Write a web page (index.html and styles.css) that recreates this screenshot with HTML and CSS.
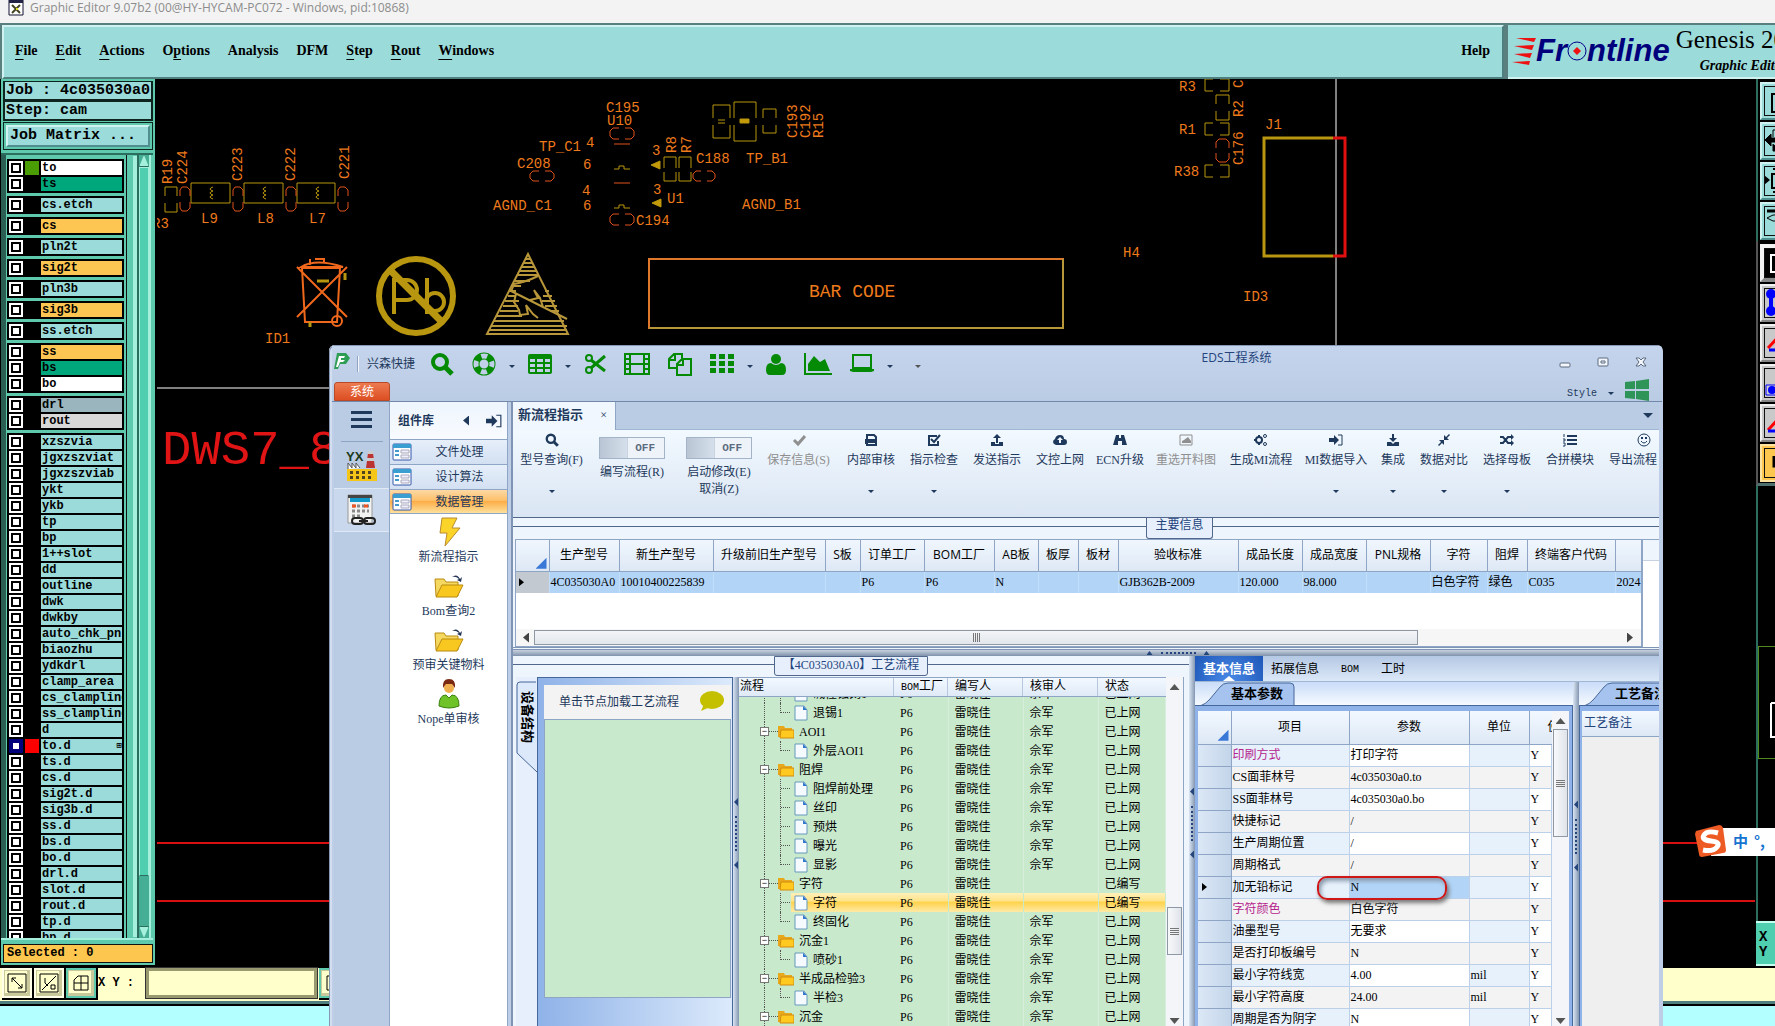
FILE: index.html
```
<!DOCTYPE html>
<html lang="zh-CN">
<head>
    <meta charset="UTF-8">
    <meta name="viewport" content="width=device-width, initial-scale=1.0">
    <title>Graphic Editor</title>
    <link rel="stylesheet" href="styles.css">
</head>
<body>
    <!-- shared icons -->
    <svg class="defs">
        <symbol id="search" viewBox="0 0 24 24"><circle cx="10" cy="10" r="7" fill="none" stroke="currentColor" stroke-width="4"/><path d="M15 15l7 7" stroke="currentColor" stroke-width="5"/></symbol>
        <symbol id="ring" viewBox="0 0 24 24"><circle cx="12" cy="12" r="8" fill="none" stroke="currentColor" stroke-width="7"/><circle cx="12" cy="12" r="8" fill="none" stroke="#c0d0e8" stroke-width="5" stroke-dasharray="6 6.57" stroke-dashoffset="3"/></symbol>
        <symbol id="grid" viewBox="0 0 24 20"><rect width="24" height="20" rx="2" fill="currentColor"/><path d="M2 5h5v3H2zM9 5h6v3H9zM17 5h5v3h-5zM2 10h5v3H2zM9 10h6v3H9zM17 10h5v3h-5zM2 15h5v3H2zM9 15h6v3H9zM17 15h5v3h-5z" fill="#c0d0e8"/></symbol>
        <symbol id="cut" viewBox="0 0 22 22"><g fill="none" stroke="currentColor" stroke-width="2"><circle cx="5" cy="5" r="3"/><circle cx="5" cy="17" r="3"/><path d="M7 7l14 11M7 15L21 3" stroke-width="3"/></g></symbol>
        <symbol id="film" viewBox="0 0 26 22"><path d="M1 1h24v20H1zM6 1v20M20 1v20M6 11h14M1 6h5M1 11h5M1 16h5M20 6h5M20 11h5M20 16h5" fill="none" stroke="currentColor" stroke-width="2"/></symbol>
        <symbol id="copy" viewBox="0 0 24 24"><path d="M9 16H1V7l5-5h8v5M1 8h6V2M9 22V12l5-5h9v16H9zM9 13h6V7" fill="none" stroke="currentColor" stroke-width="2"/></symbol>
        <symbol id="tiles" viewBox="0 0 24 20"><path d="M0 0h6v5H0zM9 0h6v5H9zM18 0h6v5h-6zM0 7h6v5H0zM9 7h6v5H9zM18 7h6v5h-6zM0 14h6v5H0zM9 14h6v5H9zM18 14h6v5h-6z" fill="currentColor"/></symbol>
        <symbol id="user" viewBox="0 0 20 22"><circle cx="10" cy="6" r="5" fill="currentColor"/><path d="M0 17q0-7 5-7 5 4 10 0 5 0 5 7 0 5-4 5H4q-4 0-4-5z" fill="currentColor"/></symbol>
        <symbol id="chart" viewBox="0 0 28 22"><path d="M1 0v21h27" fill="none" stroke="currentColor" stroke-width="2"/><path d="M4 18v-7l6-8 6 6 5-3 5 12z" fill="currentColor"/></symbol>
        <symbol id="laptop" viewBox="0 0 24 20"><path d="M3 1h18v13H3z" fill="none" stroke="currentColor" stroke-width="2"/><path d="M0 15h24v2l-3 1H3l-3-1z" fill="currentColor"/></symbol>
        <symbol id="check" viewBox="0 0 14 14"><path d="M2 7l4 4 7-8" fill="none" stroke="currentColor" stroke-width="3"/></symbol>
        <symbol id="print" viewBox="0 0 14 14"><path d="M3 6V2h7l2 2v2M3 12h9V9H3z" fill="none" stroke="currentColor" stroke-width="2"/><path d="M1 6h12v5h-2V9H3v2H1z" fill="currentColor"/></symbol>
        <symbol id="tick" viewBox="0 0 14 14"><path d="M11 8v4H2V3h8" fill="none" stroke="currentColor" stroke-width="2"/><path d="M4 6l3 3 6-7" fill="none" stroke="currentColor" stroke-width="2"/></symbol>
        <symbol id="upload" viewBox="0 0 14 14"><path d="M7 1l4 4H8v5H6V5H3zM1 9h4v2h4V9h4v4H1z" fill="currentColor"/></symbol>
        <symbol id="download" viewBox="0 0 14 14"><path d="M7 9l4-4H8V1H6v4H3zM1 9h4l2 2 2-2h4v4H1z" fill="currentColor"/></symbol>
        <symbol id="cloud" viewBox="0 0 14 14"><path d="M3 12q-3-1-3-3t2-3q1-4 5-4t4 4q3 0 3 3t-3 3z" fill="currentColor"/><path d="M7 4l3 3H8v3H6V7H4z" fill="#eef5fd"/></symbol>
        <symbol id="road" viewBox="0 0 14 14"><path d="M3 2h3v3h2V2h3l3 10H9V8H5v4H0z" fill="currentColor"/></symbol>
        <symbol id="image" viewBox="0 0 14 14"><path d="M1 2h12v10H1z" fill="none" stroke="currentColor"/><path d="M3 10V8l2-1 4-3 3 4v2z" fill="currentColor"/></symbol>
        <symbol id="gears" viewBox="0 0 14 14"><g fill="none" stroke="currentColor"><circle cx="5" cy="7" r="3" stroke-width="2"/><circle cx="11" cy="3" r="1.5"/><circle cx="11" cy="11" r="1.5"/></g><path d="M4 2h2v2H4zM4 10h2v2H4zM0 6h2v2H0z" fill="currentColor"/></symbol>
        <symbol id="signin" viewBox="0 0 14 14"><path d="M0 5h5V2l5 5-5 5V9H0z" fill="currentColor"/><path d="M9 2h4v10H9" fill="none" stroke="currentColor"/></symbol>
        <symbol id="compress" viewBox="0 0 14 14"><path d="M7 7V2l2 2 3-3 1 1-3 3 2 2zM7 7v5l-2-2-3 3-1-1 3-3-2-2z" fill="currentColor"/></symbol>
        <symbol id="shuffle" viewBox="0 0 14 14"><path d="M0 4h3l5 6h4M0 10h3l5-6h4" fill="none" stroke="currentColor" stroke-width="2"/><path d="M11 1l3 3-3 3zM11 7l3 3-3 3z" fill="currentColor"/></symbol>
        <symbol id="list" viewBox="0 0 14 14"><path d="M4 3h10M4 7h10M4 11h10" stroke="currentColor" stroke-width="2"/><path d="M1 1v3M0 6h2v2H0M0 10h2v3H0" fill="none" stroke="currentColor"/></symbol>
        <symbol id="smile" viewBox="0 0 14 14"><circle cx="7" cy="7" r="6" fill="none" stroke="currentColor"/><path d="M4 8q3 4 6 0" fill="none" stroke="currentColor"/><path d="M4 4h2v2H4zM8 4h2v2H8z" fill="currentColor"/></symbol>
        <symbol id="form" viewBox="0 0 20 18"><rect x="1" y="1" width="18" height="16" rx="1" fill="#fff" stroke="#35a"/><path d="M1 1h18v4H1z" fill="#3a9fd0"/><path d="M3 8h4M3 12h4" stroke="#49c" stroke-width="2"/><path d="M9 7h8v3H9zM9 12h8v3H9z" fill="#eef" stroke="#aab"/></symbol>
        <symbol id="open" viewBox="0 0 30 24"><path d="M1 5h9l2 3h12v14H2z" fill="#f5d860" stroke="#b98a10"/><path d="M8 11h21l-6 12H2z" fill="#f8c820" stroke="#b98a10"/><path d="M18 3q5-4 8 2l2-2-1 5-4-2 2-1q-3-3-7-2z" fill="#235"/></symbol>
        <symbol id="folder" viewBox="0 0 16 14"><path d="M0 1h6l1 2h7v9H0z" fill="#e8a81c"/><path d="M3 5h13v8H2z" fill="#ffc91f" stroke="#d18c10"/></symbol>
        <symbol id="doc" viewBox="0 0 14 16"><path d="M1 1h9l3 4v10H1z" fill="#f4faff" stroke="#69b"/><path d="M9 1l4 4H9z" fill="#37c"/></symbol>
    </svg>

    <header class="titlebar">
        <svg width="16" height="16" viewBox="0 0 16 16"><path d="M1 0h14v15H1z" fill="#fff" stroke="#113"/><path d="M1 0h14v3H1z" fill="#224"/><path d="M4 5l8 8M12 5l-8 8" stroke="#442" stroke-width="2"/><path d="M8 8h2v2H8z" fill="#dd2"/></svg>
        <span>Graphic Editor 9.07b2 (00@HY-HYCAM-PC072 - Windows, pid:10868)</span>
    </header>

    <div class="topbar">
        <nav class="menubar">
            <button><u>F</u>ile</button>
            <button><u>E</u>dit</button>
            <button><u>A</u>ctions</button>
            <button>O<u>p</u>tions</button>
            <button>Analysis</button>
            <button>DFM</button>
            <button><u>S</u>tep</button>
            <button><u>R</u>out</button>
            <button><u>W</u>indows</button>
            <button class="help">Help</button>
        </nav>
        <div class="brand">
            <svg width="24" height="28" viewBox="0 0 24 28"><path d="M4 1h20l-2 4zM2 9l20-1-2 5zM2 17l18-1-2 5zM0 25l18-1-1 4z" fill="#e11"/></svg>
            <span class="frontline">Fr<svg width="20" height="22" viewBox="0 0 20 22"><ellipse cx="10" cy="11" rx="9" ry="9" fill="none" stroke="#008" stroke-width="1"/><path d="M10 7l4 4-4 4-4-4z" fill="#e11"/></svg>ntline</span>
            <div class="product">
                <span class="product-name">Genesis 2000</span>
                <span class="product-sub">Graphic Editor</span>
            </div>
        </div>
    </div>

    <div class="workspace">
        <aside class="layers">
            <div class="job-line">Job : 4c035030a0</div>
            <div class="job-line">Step: cam</div>
            <div class="matrix-frame"><button class="matrix">Job Matrix ...</button></div>
            <div class="layer-area">
                <div class="layer-list" id="layerList"></div>
                <div class="motif-scroll"><i class="up"></i><i class="grip"></i><i class="down"></i></div>
            </div>
            <div class="selected">Selected : 0</div>
        </aside>

        <svg class="canvas">
            <g transform="translate(-157 -79)">
                <path d="M157 388h180M1336 79v270" stroke="#fff"/>
                <path d="M157 843h180M157 901h180M1660 843h60M1660 901h95" stroke="#d81010" stroke-width="2"/>
                <text class="big" x="162" y="464">DWS7_8</text>
                <g class="amber box">
                    <path d="M191 183h39v20h-39zM244 183h39v20h-39zM297 183h38v20h-38zM713 118v-13h17v13M713 125v13h17v-13M734 118v-16h22v16M734 125v16h22v-16M763 118v-9h13v9M763 125v8h13v-8M718 120h7M718 123h7M165 196v-9h12v9M165 203v9h12v-9"/>
                    <path d="M664 168v-11h12v11M664 172v9h12v-9M679 168v-11h12v11M679 172v9h12v-9M1213 79h-8v12h8M1220 79h9v12h-9M1213 123h-8v12h8M1220 123h9v12h-9M1213 165h-8v12h8M1220 165h9v12h-9M1216 104v-9h13v9M1216 111v9h13v-9"/>
                    <path d="M614 169h5v-3h5v3h6M614 208h5v-3h5v3h6M213 187q-6 2 0 4-6 2 0 4-6 2 0 4M266 187q-6 2 0 4-6 2 0 4-6 2 0 4M319 187q-6 2 0 4-6 2 0 4-6 2 0 4"/>
                </g>
                <path class="amber" d="M740 119h9v4h-9zM651 165l9-4v8zM652 203l9-4v8z" fill="#c49a0a"/>
                <g class="red box">
                    <path d="M180 196v-6l2-3h5l3 3v6M180 202v6l2 3h5l3-3v-6M233 196v-6l2-3h5l3 3v6M233 202v6l2 3h5l3-3v-6M286 196v-6l2-3h5l3 3v6M286 202v6l2 3h5l3-3v-6M338 196v-6l2-3h5l3 3v6M338 202v6l2 3h5l3-3v-6M1216 148v-6l3-3h7l3 3v6M1216 153v6l3 3h7l3-3v-6"/>
                    <path d="M539 171h-6l-3 3v4l3 3h6M545 171h6l3 3v4l-3 3h-6M619 128h-6l-3 3v5l3 3h6M625 128h6l3 3v5l-3 3h-6M619 214h-6l-3 3v5l3 3h6M625 214h6l3 3v5l-3 3h-6M701 171h-5l-3 3v4l3 3h5M707 171h5l3 3v4l-3 3h-5M614 144h16M614 183h16"/>
                </g>
                <g class="silk">
                    <text x="152" y="228">R3</text><text x="201" y="223">L9</text><text x="257" y="223">L8</text><text x="309" y="223">L7</text>
                    <text x="265" y="343">ID1</text><text x="539" y="151">TP_C1</text><text x="586" y="147">4</text><text x="517" y="168">C208</text>
                    <text x="583" y="169">6</text><text x="493" y="210">AGND_C1</text><text x="582" y="195">4</text><text x="583" y="210">6</text>
                    <text x="606" y="112">C195</text><text x="607" y="125">U10</text><text x="636" y="225">C194</text><text x="652" y="155">3</text>
                    <text x="696" y="163">C188</text><text x="653" y="194">3</text><text x="667" y="203">U1</text><text x="746" y="163">TP_B1</text>
                    <text x="742" y="209">AGND_B1</text><text x="1123" y="257">H4</text><text x="1179" y="91">R3</text><text x="1179" y="134">R1</text>
                    <text x="1174" y="176">R38</text><text x="1265" y="129">J1</text><text x="1243" y="301">ID3</text>
                    <text transform="translate(172 184) rotate(-90)">R19</text><text transform="translate(187 184) rotate(-90)">C224</text>
                    <text transform="translate(242 181) rotate(-90)">C223</text><text transform="translate(295 181) rotate(-90)">C222</text>
                    <text transform="translate(349 179) rotate(-90)">C221</text><text transform="translate(676 153) rotate(-90)">R8</text>
                    <text transform="translate(691 153) rotate(-90)">R7</text><text transform="translate(797 138) rotate(-90)">C193</text>
                    <text transform="translate(810 138) rotate(-90)">C192</text><text transform="translate(823 138) rotate(-90)">R15</text>
                    <text transform="translate(1243 117) rotate(-90)">R2</text><text transform="translate(1243 165) rotate(-90)">C176</text>
                    <text transform="translate(1243 88) rotate(-90)">C</text>
                    <text class="barcode" x="809" y="297">BAR CODE</text>
                </g>
                <rect x="649" y="259" width="414" height="69" fill="none" stroke="#e0782c" stroke-width="2"/>
                <path d="M649 328h414V259" fill="none" stroke="#b8963a" stroke-width="2"/>
                <path d="M1333 138h-69v118h69" fill="none" stroke="#b8960f" stroke-width="3"/>
                <path d="M1333 138h12v118h-12" fill="none" stroke="#e01010" stroke-width="3"/>
                <!-- crossed-out bin -->
                <g fill="none" stroke="#f0681c" stroke-width="2"><path d="M302 268l3 54h32l3-54zM301 267q15-9 42 0zM297 267l50 50M347 267l-50 50M310 259v6M315 259h9v3"/><circle cx="337" cy="321" r="5"/><path d="M317 281h12M345 273v7M310 322v5" stroke="#b8960f" stroke-width="3"/></g>
                <!-- lead free -->
                <g fill="none" stroke="#b8960f"><circle cx="416" cy="296" r="37" stroke-width="6"/><path d="M390 270l52 52" stroke-width="7"/><path d="M394 314v-34h13a10 10 0 0 1 0 20h-13M427 278v36" stroke-width="4"/><circle cx="435" cy="302" r="9" stroke-width="4"/></g>
                <!-- esd triangle -->
                <g fill="none" stroke="#b8963a" stroke-width="2"><path d="M528 254l-41 80h81z"/><path d="M526 259h4M524 263h8M522 267h12M520 271h16M518 275h20M515 281h15M513 286h8M510 291h6M545 291h4M508 296h8M543 296h9M505 301h14M542 301h13M503 306h15M545 306h12M500 311h18M550 311h9M497 316h25M494 321h70M491 326h76M489 330h78"/><path d="M509 290l58 29M538 276q-12 6-24 8l-3 8M516 294l-2 8 5 8 1 5 8-1-2-9 7 9 5 4M530 300l8-2-4-8 6 8 3 9" stroke-width="2"/></g>
            </g>
        </svg>

        <aside class="rail">
            <div class="rail-set">
                <button class="rail-btn" aria-label="Fit"><svg width="30" height="30"><path d="M8 8h20v18H8zM11 4h18" fill="none" stroke="#000" stroke-width="2"/></svg></button>
                <button class="rail-btn" aria-label="Pan left"><svg width="30" height="30"><path d="M1 14l6-6v4h6v4H7v4zM9 4v7M9 18v7h12M9 4h12" fill="#000" stroke="#000" stroke-width="1"/></svg></button>
                <button class="rail-btn" aria-label="Pan right"><svg width="30" height="30"><path d="M0 9l6 5-6 5z" fill="#000"/><path d="M8 8h18v14H8zM9 3h6M9 26h6" fill="none" stroke="#000" stroke-width="2"/></svg></button>
                <button class="rail-btn" aria-label="Tools"><svg width="30" height="30"><path d="M3 5h24M3 12l6-3h9M3 12l6 3h9M12 19h12v8H12z" fill="none" stroke="#000" stroke-width="1"/><path d="M3 5h24" stroke="#000" stroke-width="3"/></svg></button>
            </div>
            <div class="rail-set gray">
                <button class="rail-btn dark" aria-label="Select"><svg width="30" height="30"><path d="M7 7h20v17H7zM15 10q-5 5 0 10" fill="none" stroke="#fff" stroke-width="2"/></svg></button>
                <button class="rail-btn" aria-label="Net"><svg width="30" height="30"><path d="M7 6v18" stroke="#00f" stroke-width="4"/><circle cx="7" cy="6" r="5" fill="#00f"/><circle cx="7" cy="23" r="5" fill="#00f"/></svg></button>
                <button class="rail-btn" aria-label="Line"><svg width="30" height="30"><path d="M4 20l14-15" stroke="#f00" stroke-width="3"/><path d="M5 22h20" stroke="#00f" stroke-width="3"/></svg></button>
                <button class="rail-btn" aria-label="Pad"><svg width="30" height="30"><path d="M2 17h24v10H2z" fill="#ccc" stroke="#00f" stroke-width="1"/><circle cx="8" cy="22" r="4" fill="#00f"/></svg></button>
                <button class="rail-btn" aria-label="Edge"><svg width="30" height="30"><path d="M4 22l14-15" stroke="#f00" stroke-width="3"/><path d="M4 23h20" stroke="#00f" stroke-width="3"/></svg></button>
                <button class="rail-btn amber-btn" aria-label="Mode"><svg width="30" height="30"><path d="M10 8v10h12" fill="none" stroke="#000" stroke-width="3"/></svg></button>
            </div>
            <div class="overview"><div class="overview-box"><svg width="18" height="60"><path d="M12 6v34h6M12 6h6" fill="none" stroke="#fff" stroke-width="2"/></svg></div></div>
            <div class="coords">X<br>Y</div>
        </aside>
    </div>

    <div class="entry-bar">
        <button class="entry-btn" aria-label="Zoom"><svg width="20" height="20"><path d="M1 1h18v18H1zM5 5l10 10M5 9V5h4M15 11v4h-4" fill="none" stroke="#000"/></svg></button>
        <button class="entry-btn" aria-label="Angle"><svg width="20" height="20"><path d="M1 1h18v18H1zM3 17L17 3M6 5v5l3 3M12 12h4v4h-4z" fill="none" stroke="#000"/></svg></button>
        <button class="entry-btn on" aria-label="Grid"><svg width="16" height="16"><path d="M5 1h10v14H1V5zM1 8h14M8 1v14" fill="none" stroke="#000"/></svg></button>
        <label for="xy">X Y :</label>
        <input id="xy" type="text">
        <button class="entry-btn on" aria-label="Snap"><svg width="16" height="16"><path d="M1 1h14v14H1z" fill="none" stroke="#000"/></svg></button>
    </div>
    <footer class="status"></footer>

    <div class="eds">
        <div class="eds-title">
            <div class="quick">
                <svg class="eds-logo" width="16" height="16" viewBox="0 0 16 16"><path d="M3 0h9l4 5-4 6H6l-2 5H0z" fill="#2e9e55"/><path d="M5 3h6l-1 2H7v2h4l-2 2H6l-2 5H2z" fill="#fff"/></svg>
                <span class="bar"></span>
                <span class="eds-name">兴森快捷</span>
                <button aria-label="Search"><svg width="24" height="24"><use href="#search"/></svg></button>
                <button aria-label="Help"><svg width="24" height="24"><use href="#ring"/></svg></button><i class="caret"></i>
                <button aria-label="Table"><svg width="24" height="20"><use href="#grid"/></svg></button><i class="caret"></i>
                <button aria-label="Cut"><svg width="22" height="22"><use href="#cut"/></svg></button>
                <button aria-label="Film"><svg width="26" height="22"><use href="#film"/></svg></button>
                <button aria-label="Copy"><svg width="24" height="24"><use href="#copy"/></svg></button>
                <button aria-label="Tiles"><svg width="24" height="20"><use href="#tiles"/></svg></button><i class="caret"></i>
                <button aria-label="User"><svg width="20" height="22"><use href="#user"/></svg></button>
                <button aria-label="Chart"><svg width="28" height="22"><use href="#chart"/></svg></button>
                <button aria-label="Screen"><svg width="24" height="20"><use href="#laptop"/></svg></button><i class="caret"></i>
                <i class="caret more"></i>
            </div>
            <div class="caption">EDS工程系统</div>
            <div class="controls">
                <button aria-label="Minimize"><svg width="12" height="12"><rect x="1" y="7" width="10" height="4" rx="1"/></svg></button>
                <button aria-label="Maximize"><svg width="12" height="12"><rect x="1" y="2" width="10" height="8" rx="1"/><path d="M4 5h4v2H4z"/></svg></button>
                <button aria-label="Close"><svg width="12" height="12"><path d="M1 2h3l2 2 2-2h3L8 6l3 4H8L6 8l-2 2H1l3-4z"/></svg></button>
            </div>
            <button class="system">系统</button>
            <div class="style-row">
                <button class="style-btn">Style</button><i class="caret"></i>
                <svg width="24" height="22" viewBox="0 0 24 22"><path d="M0 3l10-1v8H0zM11 2l13-2v10H11zM0 12h10v8L0 19zM11 12h13v10l-13-2z" fill="#2f9457"/></svg>
            </div>
        </div>

        <div class="eds-body">
            <div class="strip">
                <button class="burger" aria-label="Menu"><i></i><i></i><i></i></button>
                <button class="strip-btn" aria-label="Factory"><svg width="32" height="32" viewBox="0 0 32 32"><text x="0" y="12" class="yx">YX</text><path d="M22 4h5l2 15h-9z" fill="#b33"/><path d="M22 2h5v3h-5zM21 9h7v3h-7z" fill="#ccc"/><path d="M2 20v-6l4 5v-5l4 5v-5l4 5" fill="#fff" stroke="#555"/><path d="M1 20h30v12H1z" fill="#f5c518"/><path d="M4 22h3v3H4zM10 22h3v3h-3zM16 22h3v3h-3zM22 22h3v3h-3zM4 27h3v3H4zM10 27h3v3h-3zM16 27h3v3h-3zM22 27h3v3h-3z" fill="#542"/></svg></button>
                <button class="strip-btn light" aria-label="Calculator"><svg width="30" height="32" viewBox="0 0 30 32"><path d="M1 1h24v28H1z" fill="#f2f2f2" stroke="#999"/><path d="M1 1h24v3H1z" fill="#444"/><path d="M3 4h20v4H3z" fill="#19c"/><path d="M5 12h17M5 17h17M5 22h10" stroke="#888" stroke-width="3" stroke-dasharray="3 2"/><path d="M5 12h4M17 12h4" stroke="#e52" stroke-width="3"/><g fill="none" stroke="#222" stroke-width="2"><rect x="5" y="24" width="11" height="6" rx="3"/><rect x="17" y="24" width="11" height="6" rx="3"/><path d="M12 27h9"/></g></svg></button>
            </div>

            <nav class="side">
                <div class="side-head"><b>组件库</b><i class="left"></i><svg width="16" height="16"><use href="#signin"/></svg></div>
                <button class="group"><svg width="20" height="18"><use href="#form"/></svg><span>文件处理</span></button>
                <button class="group"><svg width="20" height="18"><use href="#form"/></svg><span>设计算法</span></button>
                <button class="group active"><svg width="20" height="18"><use href="#form"/></svg><span>数据管理</span></button>
                <div class="shortcuts">
                    <a href="#"><svg width="30" height="30" viewBox="0 0 30 30"><path d="M8 1h15l-5 10h8L11 29l2-13H6z" fill="#fbd42a" stroke="#b98a30"/></svg>新流程指示</a>
                    <a href="#"><svg width="30" height="30"><use href="#open"/></svg>Bom查询2</a>
                    <a href="#"><svg width="30" height="30"><use href="#open"/></svg>预审关键物料</a>
                    <a href="#"><svg width="30" height="30" viewBox="0 0 30 30"><circle cx="15" cy="9" r="5" fill="#f0b050"/><path d="M9 9q-1-9 6-9t6 9l-3-4h-6z" fill="#7a2a12"/><path d="M5 27q0-11 7-11l3 3 3-3q7 0 7 11-10 4-20 0z" fill="#6fc328" stroke="#3a8010"/></svg>Nope单审核</a>
                </div>
            </nav>

            <main class="main">
                <div class="tabs"><button class="tab"><b>新流程指示</b><span>×</span></button><i class="caret big-caret"></i></div>
                <div class="tools">
                    <button class="tool w-key"><svg width="14" height="14"><use href="#search"/></svg>型号查询(F)<i class="caret"></i></button>
                    <div class="switches">
                        <label class="switch"><input type="checkbox"><span>OFF</span>编写流程(R)</label>
                        <label class="switch"><input type="checkbox"><span>OFF</span>启动修改(E)<br>取消(Z)</label>
                    </div>
                    <button class="tool w-key" disabled><svg width="14" height="14"><use href="#check"/></svg>保存信息(S)</button>
                    <button class="tool"><svg width="14" height="14"><use href="#print"/></svg>内部审核<i class="caret"></i></button>
                    <button class="tool"><svg width="14" height="14"><use href="#tick"/></svg>指示检查<i class="caret"></i></button>
                    <button class="tool"><svg width="14" height="14"><use href="#upload"/></svg>发送指示</button>
                    <button class="tool"><svg width="14" height="14"><use href="#cloud"/></svg>文控上网</button>
                    <button class="tool w-ecn"><svg width="14" height="14"><use href="#road"/></svg>ECN升级</button>
                    <button class="tool w-five" disabled><svg width="14" height="14"><use href="#image"/></svg>重选开料图</button>
                    <button class="tool w-five"><svg width="14" height="14"><use href="#gears"/></svg>生成MI流程</button>
                    <button class="tool w-five"><svg width="14" height="14"><use href="#signin"/></svg>MI数据导入<i class="caret"></i></button>
                    <button class="tool w-two"><svg width="14" height="14"><use href="#download"/></svg>集成<i class="caret"></i></button>
                    <button class="tool"><svg width="14" height="14"><use href="#compress"/></svg>数据对比<i class="caret"></i></button>
                    <button class="tool"><svg width="14" height="14"><use href="#shuffle"/></svg>选择母板<i class="caret"></i></button>
                    <button class="tool"><svg width="14" height="14"><use href="#list"/></svg>合拼模块</button>
                    <button class="tool last-tool"><svg width="14" height="14"><use href="#smile"/></svg>导出流程</button>
                </div>

                <section class="info">
                    <div class="legend-line info-legend"><span class="legend">主要信息</span></div>
                    <div class="info-wrap">
                        <div class="info-grid">
                            <table class="orders">
                                <colgroup id="orderCols"></colgroup>
                                <thead><tr id="orderHead"></tr></thead>
                                <tbody><tr id="orderRow"></tr></tbody>
                            </table>
                            <div class="hscroll"><i class="left"></i><div class="hthumb"></div><i class="right"></i></div>
                        </div>
                        <div class="info-rest"></div>
                    </div>
                </section>
                <div class="hsplit"><i></i><span></span><i></i></div>

                <div class="lower">
                    <section class="flow">
                        <div class="legend-line"><span class="legend flow-legend">【4C035030A0】工艺流程</span></div>
                        <div class="flow-body">
                            <div class="vtabs"><button class="vtab"><svg width="21" height="92"><path d="M20 1H4Q1 1 1 4v68l20 19" fill="#dce9fb" stroke="#46679a"/></svg><span>设备结构</span></button></div>
                            <div class="device">
                                <div class="device-head">单击节点加载工艺流程<svg width="26" height="22"><ellipse cx="13" cy="9" rx="12" ry="9" fill="#c4c000"/><path d="M5 13l-3 7 9-4z" fill="#c4c000"/></svg></div>
                                <div class="device-body"></div>
                            </div>
                            <div class="vsplit"><i></i><span></span><i></i></div>
                            <div class="tree-pane">
                                <div class="tree-head"><span>流程</span><span><small>BOM</small>工厂</span><span>编写人</span><span>核审人</span><span>状态</span></div>
                                <div class="tree-view">
                                    <table class="tree">
                                        <colgroup><col class="c-name"><col class="c-bom"><col class="c-man"><col class="c-man"><col></colgroup>
                                        <tbody id="tree"></tbody>
                                    </table>
                                </div>
                            </div>
                            <div class="vscroll"><i class="up"></i><div class="vthumb low"></div><i class="down"></i></div>
                        </div>
                    </section>
                    <div class="vsplit outer"><i></i><span></span><i></i></div>

                    <section class="detail">
                        <div class="detail-tabs"><button class="on">基本信息</button><button>拓展信息</button><button><small>BOM</small></button><button>工时</button></div>
                        <div class="detail-body">
                            <div class="params-pane">
                                <div class="subtabs"><button class="subtab"><svg width="96" height="24"><path d="M0 24Q6 22 10 17L20 5Q23 1 28 1H90Q94 1 94 5V24z" fill="#a5c3ee" stroke="#46679a"/></svg><b>基本参数</b></button></div>
                                <div class="params-frame">
                                    <div class="params-view">
                                        <table class="params">
                                            <colgroup><col class="p-mark"><col class="p-item"><col class="p-value"><col class="p-unit"><col class="p-use"></colgroup>
                                            <thead><tr><th><i class="corner"></i></th><th>项目</th><th>参数</th><th>单位</th><th>使用</th></tr></thead>
                                            <tbody id="params"></tbody>
                                        </table>
                                    </div>
                                    <div class="vscroll"><i class="up"></i><div class="vthumb top"></div><i class="down"></i></div>
                                </div>
                            </div>
                            <div class="vsplit"><i></i><span></span><i></i></div>
                            <div class="notes">
                                <div class="subtabs"><button class="subtab"><svg width="96" height="24"><path d="M0 24Q6 22 10 17L20 5Q23 1 28 1H96V24z" fill="#a5c3ee" stroke="#46679a"/></svg><b>工艺备注</b></button></div>
                                <div class="notes-frame">
                                    <div class="notes-head">工艺备注</div>
                                    <div class="notes-body"></div>
                                </div>
                            </div>
                        </div>
                    </section>
                </div>
            </main>
        </div>
    </div>

    <!-- input method bar -->
    <div class="ime">
        <svg width="32" height="34" viewBox="0 0 32 34"><path d="M1 7L24 1q3 0 4 3l3 22q0 3-3 3L7 33q-3 0-3-3L0 10z" fill="#ee5a24"/><path d="M23 9Q12 6 9 11t7 6 6 6-14 3" fill="none" stroke="#fff" stroke-width="5"/></svg>
        <span>中</span><span>°,</span>
    </div>

    <script>
        const groups = [
            [['to', 'white', 'green'], ['ts', 'teal']],
            [['cs.etch']], [['cs', 'orange']], [['pln2t']], [['sig2t', 'orange']],
            [['pln3b']], [['sig3b', 'orange']], [['ss.etch']],
            [['ss', 'orange'], ['bs', 'teal'], ['bo', 'white']],
            [['drl', 'slate'], ['rout', 'silver']],
            ['xzszvia', 'jgxzszviat', 'jgxzszviab', 'ykt', 'ykb', 'tp', 'bp', '1++slot', 'dd', 'outline',
             'dwk', 'dwkby', 'auto_chk_pnl', 'biaozhu', 'ydkdrl', 'clamp_area', 'cs_clampline', 'ss_clampline',
             'd', 'to.d', 'ts.d', 'cs.d', 'sig2t.d', 'sig3b.d', 'ss.d', 'bs.d', 'bo.d', 'drl.d', 'slot.d',
             'rout.d', 'tp.d', 'bp.d'].map(n => n == 'to.d' ? [n, '', 'red'] : [n])
        ];
        let html = '';
        groups.forEach(g => {
            html += '<div class="layer-group">';
            g.forEach(([name, color, swatch]) => {
                const work = name == 'to.d';
                html += `<label class="layer"><input type="checkbox" class="${work ? 'work' : ''}"><i class="${swatch || ''}"></i>` +
                    `<span class="${color || ''}">${name}${work ? '<em>⊞</em>' : ''}</span></label>`;
            });
            html += '</div>';
        });
        document.getElementById('layerList').innerHTML = html;

        // order table: title, width, value
        const orders = [
            ['', 33, ''], ['生产型号', 70, '4C035030A0'], ['新生产型号', 94, '10010400225839'], ['升级前旧生产型号', 112, ''],
            ['S板', 35, ''], ['订单工厂', 64, 'P6'], ['BOM工厂', 70, 'P6'], ['AB板', 44, 'N'], ['板厚', 40, ''],
            ['板材', 40, ''], ['验收标准', 120, 'GJB362B-2009'], ['成品长度', 64, '120.000'], ['成品宽度', 64, '98.000'],
            ['PNL规格', 64, ''], ['字符', 57, '白色字符'], ['阻焊', 40, '绿色'], ['终端客户代码', 88, 'C035'], ['', 60, '2024']
        ];
        orderCols.innerHTML = orders.map(o => `<col style="width:${o[1]}px">`).join('');
        orderHead.innerHTML = orders.map((o, i) => `<th>${i ? o[0] : '<i class="corner"></i>'}</th>`).join('');
        orderRow.innerHTML = orders.map((o, i) => i ? `<td>${o[2]}</td>` : '<td class="mark"><i class="right"></i></td>').join('');

        // tree rows: level, title, last child
        const flow = [
            [1, '碱性蚀刻1', 0], [1, '退锡1', 1], [0, 'AOI1'], [1, '外层AOI1', 1], [0, '阻焊'], [1, '阻焊前处理', 0],
            [1, '丝印', 0], [1, '预烘', 0], [1, '曝光', 0], [1, '显影', 1], [0, '字符'], [1, '字符', 0], [1, '终固化', 1],
            [0, '沉金1'], [1, '喷砂1', 1], [0, '半成品检验3'], [1, '半检3', 1], [0, '沉金']
        ];
        tree.innerHTML = flow.map(([level, name, last], i) => {
            const editing = i == 10 || i == 11;
            const icon = level
                ? `<i class="branch ${last ? 'last' : ''}"></i><svg width="14" height="16"><use href="#doc"/></svg>`
                : '<i class="minus">−</i><i class="stub"></i><svg width="16" height="14"><use href="#folder"/></svg>';
            return `<tr class="${i == 11 ? 'sel' : ''}"><td><div class="node">${icon}<span>${name}</span></div></td><td>P6</td>` +
                `<td>雷晓佳</td><td>${editing ? '' : '佘军'}</td><td>${editing ? '已编写' : '已上网'}</td></tr>`;
        }).join('');

        const rows = [
            ['印刷方式', '打印字符', ''], ['CS面菲林号', '4c035030a0.to', ''], ['SS面菲林号', '4c035030a0.bo', ''],
            ['快捷标记', '/', ''], ['生产周期位置', '/', ''], ['周期格式', '/', ''], ['加无铅标记', 'N', ''],
            ['字符颜色', '白色字符', ''], ['油墨型号', '无要求', ''], ['是否打印板编号', 'N', ''],
            ['最小字符线宽', '4.00', 'mil'], ['最小字符高度', '24.00', 'mil'], ['周期是否为阴字', 'N', '']
        ];
        params.innerHTML = rows.map((r, i) =>
            `<tr class="${i == 6 ? 'current' : ''}"><td>${i == 6 ? '<i class="right"></i>' : ''}</td>` +
            `<td class="${i == 0 || i == 7 ? 'pink' : ''}">${r[0]}</td><td>${r[1]}${i == 6 ? '<div class="callout"></div>' : ''}</td>` +
            `<td>${r[2]}</td><td>Y</td></tr>`).join('');
    </script>
</body>
</html>
```

FILE: styles.css
```
* {
    box-sizing: border-box;
}
body {
    margin: 0;
    height: 100vh;
    overflow: hidden;
    display: flex;
    flex-direction: column;
    background: #000;
    font: 12px/14px "Liberation Serif", "Noto Sans CJK SC", serif;
    color: #000;
}
button {
    border: none;
    background: transparent;
    padding: 0;
    font: inherit;
    color: inherit;
    white-space: nowrap;
}
svg {
    flex: none;
    display: block;
}
small {
    font: 10px/14px "Liberation Mono", monospace;
}
.defs {
    display: none;
}

/* host application */
.titlebar {
    height: 23px;
    flex: none;
    display: flex;
    gap: 6px;
    padding-left: 8px;
    background: #f3f3f3;
    color: #8c8c8c;
    font: 12px/16px "Open Sans", sans-serif;
}
.topbar {
    height: 56px;
    flex: none;
    display: flex;
    background: #5a7f7f;
}
.menubar {
    flex: 1;
    display: flex;
    align-items: center;
    gap: 18px;
    padding: 0 12px 2px 11px;
    margin: 2px 4px 0 2px;
    background: #9bdbda;
    border: 2px solid #d0f3f2;
    border-right-color: #4f7f7f;
    border-bottom-color: #4f7f7f;
    font: bold 14px/18px "Liberation Serif", serif;
}
.menubar u {
    text-underline-offset: 4px;
}
.help {
    margin-left: auto;
}
.brand {
    width: 267px;
    display: flex;
    align-items: center;
    margin-top: 2px;
    padding-left: 4px;
    overflow: hidden;
    background: #9bdbda;
    border-bottom: 2px solid #d0f3f2;
}
.frontline {
    display: flex;
    align-items: center;
    color: #00007c;
    font: italic bold 31px/32px "Liberation Sans", sans-serif;
}
.product {
    flex: none;
    display: flex;
    flex-direction: column;
    padding-left: 6px;
    gap: 4px;
}
.product-name {
    font-size: 25px;
    line-height: 26px;
}
.product-sub {
    padding-left: 24px;
    font: italic bold 14px/18px "Liberation Serif", serif;
}
.workspace {
    flex: 1;
    min-height: 0;
    display: flex;
}
.layers {
    width: 154px;
    margin: 0 2px 1px 1px;
    display: flex;
    flex-direction: column;
    padding: 2px 2px 2px;
    background: #5ec9ac;
    font: bold 13px/14px "Liberation Mono", monospace;
}
.job-line {
    height: 20px;
    flex: none;
    padding-left: 1px;
    background: #9bdbda;
    border: 2px solid #10241f;
    border-top-width: 1px;
    font-size: 15px;
    line-height: 18px;
    white-space: nowrap;
}
.matrix-frame {
    margin-top: 1px;
    padding: 2px;
    border: 1px solid #10241f;
}
.matrix {
    display: block;
    width: 100%;
    height: 22px;
    padding-left: 2px;
    text-align: left;
    background: #9bdbda;
    border: 2px solid #d0f3f2;
    border-right-color: #4f8f8f;
    border-bottom-color: #4f8f8f;
    font-size: 15px;
}
.layer-area {
    flex: 1;
    min-height: 0;
    display: flex;
    margin: 3px 0 4px -2px;
    border-top: 2px solid #2c6e5e;
    border-bottom: 2px solid #a4f0dc;
}
.layer-list {
    width: 126px;
    padding: 4px 2px 0 1px;
    overflow: hidden;
    display: flex;
    flex-direction: column;
    gap: 3px;
    border-left: 5px solid #2c5f54;
    border-right: 1px solid #111;
}
.layer-group {
    flex: none;
    padding: 2px;
    display: flex;
    flex-direction: column;
    gap: 2px;
    background: #000;
}
.layer {
    height: 14px;
    display: flex;
    gap: 2px;
}
.layer input {
    appearance: none;
    flex: none;
    width: 14px;
    height: 14px;
    margin: 0;
    background: #fff;
    border: 2px solid #fff;
    outline: 2px solid #000;
    outline-offset: -4px;
}
.layer input.work {
    border-color: #00007c;
    outline-color: #00007c;
}
.layer i {
    width: 14px;
}
.layer span {
    flex: 1;
    display: flex;
    overflow: hidden;
    padding-left: 1px;
    background: #9bdbda;
    line-height: 14px;
    font-size: 12px;
}
.layer em {
    margin-left: auto;
    font-style: normal;
    font-size: 9px;
}
.layer .green {
    background: #4a9e04;
}
.layer .red {
    background: #f00;
}
.layer .white {
    background: #fff;
}
.layer .teal {
    background: #00a67c;
}
.layer .orange {
    background: #fdc653;
}
.layer .slate {
    background: #9ab5bd;
}
.layer .silver {
    background: #d8d8d8;
}
.motif-scroll {
    flex: 1;
    margin: 0 2px 0 10px;
    display: flex;
    flex-direction: column;
    align-items: stretch;
    border-left: 2px solid #2c6e5e;
    border-right: 2px solid #a4f0dc;
    background: #45ae94;
    box-shadow: -5px 0 0 -1px #a4f0dc;
}
.motif-scroll .grip {
    flex: 1;
    margin-bottom: 50px;
    background: #50cfb0;
    border: 1px solid #a4f0dc;
    border-bottom-color: #2c6e5e;
}
.motif-scroll .up,
.motif-scroll .down {
    width: auto;
    height: 12px;
    background: #a4f0dc;
    border: 1px solid #2c6e5e;
    clip-path: polygon(50% 0, 100% 100%, 0 100%);
}
.motif-scroll .down {
    clip-path: polygon(0 0, 100% 0, 50% 100%);
}
.selected {
    height: 19px;
    flex: none;
    padding-left: 3px;
    background: #fdc64e;
    border: 1px solid #111;
    font-size: 12px;
    line-height: 17px;
}
.canvas {
    flex: 1;
    min-width: 0;
    height: 100%;
}
.box {
    fill: none;
}
.amber {
    stroke: #b8960f;
}
.red.box {
    stroke: #e0501c;
}
.silk text {
    fill: #ee7a1c;
    font-family: "Liberation Mono", monospace;
    font-size: 14px;
}
.silk .barcode {
    font-size: 18px;
}
.big {
    fill: #e01414;
    font-family: "Liberation Mono", monospace;
    font-size: 49px;
}
.rail {
    width: 19px;
    overflow: hidden;
    display: flex;
    flex-direction: column;
}
.rail-set {
    width: 44px;
    flex: none;
    padding: 3px 2px 1px;
    display: flex;
    flex-direction: column;
    gap: 2px;
    background: #000;
    border-left: 2px solid #2c6e5e;
}
.rail-set.gray {
    border-left-color: #555;
    border-bottom: 3px solid #4f6f6f;
}
.rail-btn {
    width: 40px;
    height: 38px;
    padding: 2px;
    background: #9bdbda;
    border: 2px solid #d0f3f2;
    border-bottom-color: #4f8f8f;
    outline: 1px solid #111;
    outline-offset: -5px;
}
.gray .rail-btn {
    background: #c9c9c9;
    border-color: #f2f2f2;
    border-bottom-color: #888;
}
.gray .dark {
    background: #000;
    border-width: 4px;
    padding: 0;
}
.gray .amber-btn {
    background: #fdc64e;
    border-color: #ffe3a0;
}
.overview {
    flex: 1;
    padding-top: 160px;
    border-left: 2px solid #2c6e5e;
}
.overview-box {
    height: 113px;
    padding-top: 50px;
    border: 1px solid #4f8a1c;
    border-width: 1px 0 1px 1px;
}
.coords {
    height: 45px;
    flex: none;
    padding: 7px 3px;
    background: #50cfb0;
    border-top: 2px solid #c6fff0;
    border-bottom: 2px solid #c6fff0;
    font: bold 14px/15px "Liberation Mono", monospace;
}
.entry-bar {
    height: 35px;
    flex: none;
    display: flex;
    padding: 0 2px 3px;
    gap: 2px;
    background: #ffffcc;
    border-top: 2px solid #000;
}
.entry-btn {
    width: 30px;
    height: 30px;
    display: flex;
    align-items: center;
    justify-content: center;
    border: 2px solid #ffffe8;
    box-shadow: inset -1px -1px 0 2px #c9c99c, 1px 1px 0 1px #000;
}
.entry-btn.on {
    border-color: #5ec9ac;
}
.entry-bar label {
    width: 46px;
    font: bold 12px/30px "Liberation Mono", monospace;
    white-space: nowrap;
}
.entry-bar input {
    width: 171px;
    background: #ffffcc;
    border: 3px solid #99996f;
    outline: 1px solid #333;
}
.status {
    height: 25px;
    flex: none;
    background: #b3fefe;
    border-top: 3px solid #4f8080;
    box-shadow: inset 0 2px 0 #000;
}

/* EDS window */
.eds {
    position: absolute;
    top: 345px;
    left: 329px;
    right: 112px;
    bottom: 0;
    padding: 0 4px 0 5px;
    display: flex;
    flex-direction: column;
    overflow: hidden;
    background: #bdcee6;
    border-radius: 6px 6px 0 0;
    box-shadow: inset 1px 1px 0 #8798b4, inset 3px 0 0 #d3dff0;
    color: #1e395b;
}
.eds-title {
    height: 56px;
    flex: none;
    display: grid;
    grid-template-columns: 1fr auto;
    grid-template-rows: 36px 19px;
    border-bottom: 1px solid #7288ab;
    background: linear-gradient(#c4d4ec, #bacce4);
    margin: 1px -3px 0 -2px;
    padding: 0 3px 0 2px;
}
.caption {
    position: absolute;
    left: 240px;
    right: 0;
    top: 6px;
    padding-left: 241px;
    text-align: center;
    font: 12px/14px "Open Sans", "Noto Sans CJK SC", sans-serif;
    color: #24447c;
    pointer-events: none;
}
.quick {
    display: flex;
    align-items: center;
    gap: 18px;
    color: #058a05;
}
.quick .eds-logo {
    margin-bottom: 6px;
}
.quick .bar {
    width: 1px;
    height: 16px;
    margin: 0 -10px;
    background: #f4f8fd;
    box-shadow: -1px 0 0 #8fa3c2;
}
.quick .eds-name {
    margin-right: -3px;
    color: #1e395b;
}
.quick .caret {
    margin: 4px -5px 0;
}
.quick .more {
    margin-left: 9px;
    border-top-color: #555;
    box-shadow: 0 -6px 0 -3px #555;
}
.caret {
    width: 0;
    height: 0;
    flex: none;
    border: 3px solid transparent;
    border-top-color: #1e395b;
    border-bottom: none;
}
.controls {
    display: flex;
    gap: 26px;
    align-items: flex-start;
    padding: 10px 12px 0 0;
}
.controls svg {
    fill: #f3f7fc;
    stroke: #5b6a80;
}
.system {
    width: 56px;
    height: 19px;
    align-self: end;
    border-radius: 3px 3px 0 0;
    background: linear-gradient(#ee7a50, #dc4f22);
    border: 1px solid #b84a28;
    color: #fff;
}
.style-row {
    display: flex;
    align-items: center;
    justify-content: flex-end;
    gap: 11px;
    padding: 0 10px 4px 0;
    font-family: "Liberation Mono", monospace;
    font-size: 10px;
}
.style-btn,
.style-row .caret {
    margin-top: 8px;
}
.eds-body {
    flex: 1;
    min-height: 0;
    display: flex;
}
.strip {
    width: 56px;
    flex: none;
    background: #bacce4;
    display: flex;
    flex-direction: column;
    align-items: center;
    border-right: 1px solid #8ea5c6;
}
.burger {
    width: 42px;
    height: 40px;
    flex: none;
    padding-bottom: 4px;
    display: flex;
    flex-direction: column;
    align-items: center;
    justify-content: center;
    gap: 4px;
    border-bottom: 1px solid #8ea5c6;
}
.burger i {
    width: 21px;
    height: 3px;
    background: #1e395b;
}
.strip-btn {
    width: 100%;
    height: 47px;
    flex: none;
    display: flex;
    align-items: center;
    justify-content: center;
    border-bottom: 1px solid #dfe9f6;
}
.strip-btn.light {
    height: 43px;
    background: #c9d8ec;
}
.yx {
    font: bold 13px "Liberation Sans", sans-serif;
    fill: #1c3a1c;
}
.side {
    width: 118px;
    flex: none;
    display: flex;
    flex-direction: column;
    background: #fff;
    border-right: 1px solid #8ea5c6;
}
.side-head {
    height: 37px;
    flex: none;
    display: flex;
    align-items: center;
    gap: 17px;
    padding: 0 5px 0 8px;
    background: linear-gradient(#eef5fd, #f8fbff);
}
.side-head .left {
    margin-left: auto;
}
.left,
.right,
.up,
.down {
    width: 6px;
    height: 10px;
    flex: none;
    background: #1e395b;
    clip-path: polygon(0 50%, 100% 0, 100% 100%);
}
.right {
    clip-path: polygon(0 0, 100% 50%, 0 100%);
}
.up {
    width: 10px;
    height: 6px;
    clip-path: polygon(50% 0, 100% 100%, 0 100%);
}
.down {
    width: 10px;
    height: 6px;
    clip-path: polygon(0 0, 100% 0, 50% 100%);
}
.group {
    height: 25px;
    flex: none;
    display: flex;
    align-items: center;
    padding-left: 2px;
    border-top: 1px solid #8ea5c6;
    background: linear-gradient(#e6effa, #d3e0f2);
}
.group span {
    flex: 1;
}
.group.active {
    background: linear-gradient(#fdd9a5, #fdc06a 45%, #fdae48 50%, #fee09c);
    border-bottom: 1px solid #8ea5c6;
}
.shortcuts {
    padding-top: 3px;
    display: flex;
    flex-direction: column;
    gap: 4px;
}
.shortcuts a {
    height: 50px;
    display: flex;
    flex-direction: column;
    align-items: center;
    gap: 3px;
    color: #1e395b;
    text-decoration: none;
}
.main {
    flex: 1;
    min-width: 0;
    display: flex;
    flex-direction: column;
    margin-left: 3px;
    border-left: 2px solid #7f94b5;
    background: #eef5fd;
}
.tabs {
    height: 28px;
    flex: none;
    display: flex;
    align-items: center;
    justify-content: space-between;
    padding-right: 6px;
    background: #bacce4;
    border-bottom: 1px solid #9fb6d4;
}
.tab {
    width: 103px;
    height: 28px;
    display: flex;
    align-items: center;
    justify-content: space-between;
    padding: 0 8px 2px 5px;
    background: #f0f7ff;
    border-right: 1px solid #8ea5c6;
}
.tab b {
    font-size: 13px;
}
.big-caret {
    border-width: 5px 5px 0;
}
.tools {
    height: 87px;
    flex: none;
    display: flex;
    gap: 15px;
    padding: 3px 0 0 5px;
    overflow: hidden;
    background: linear-gradient(#f2f9ff, #dae5f3);
}
.tool {
    width: 48px;
    flex: none;
    display: flex;
    flex-direction: column;
    align-items: center;
    gap: 5px;
    line-height: 16px;
}
.tool .caret {
    margin-top: 17px;
}
.last-tool svg {
    align-self: flex-end;
    margin-right: 6px;
}
.tool:disabled {
    color: #8f8f8f;
}
.w-key {
    width: 67px;
}
.w-ecn {
    width: 42px;
}
.w-five {
    width: 60px;
}
.w-two {
    width: 24px;
}
.switches {
    display: flex;
    gap: 17px;
    margin: 0 -4px 0 -3px;
}
.switch {
    width: 70px;
    padding-top: 4px;
    text-align: center;
    line-height: 17px;
}
.switch input {
    position: absolute;
    appearance: none;
}
.switch span {
    display: block;
    width: 66px;
    height: 22px;
    margin: 0 auto 5px;
    padding-right: 9px;
    text-align: right;
    border: 1px solid #a3b3c8;
    background: linear-gradient(90deg, #b9c5d4, #d5dfeb 27px, #a3b3c8 27px, #eef3f9 28px);
    color: #5c6b80;
    font: bold 11px/20px "Liberation Mono", monospace;
}
.info {
    height: 133px;
    flex: none;
    display: flex;
    flex-direction: column;
    border-top: 1px solid #51678b;
    background: #eef5fd;
}
.legend-line {
    height: 21px;
    flex: none;
    display: flex;
    justify-content: center;
    background: linear-gradient(#51678b, #51678b) 0 8px / 100% 1px no-repeat;
}
.info-legend {
    padding-left: 187px;
}
.legend {
    height: 21px;
    padding: 0 8px;
    line-height: 15px;
    border: 1px solid #51678b;
    border-top: none;
    border-radius: 0 0 3px 3px;
    background: #e6effb;
    color: #24447c;
}
.flow-legend {
    height: 20px;
    line-height: 16px;
    border: 1px solid #51678b;
}
.info-wrap {
    flex: 1;
    min-height: 0;
    display: flex;
    padding-left: 2px;
    border-bottom: 3px double #7f94b5;
}
.info-grid {
    flex: 1;
    min-width: 0;
    display: flex;
    flex-direction: column;
    overflow: hidden;
    background: #fff;
    border: 1px solid #8ea5c6;
    border-right: 2px solid #8ea5c6;
}
.info-rest {
    width: 16px;
    background: linear-gradient(#eef5fd 20px, #8ea5c6 20px, #fff 21px);
    border-top: 1px solid #8ea5c6;
}
table {
    border-collapse: collapse;
    table-layout: fixed;
    color: #000;
}
th,
td {
    padding: 0;
    font-weight: normal;
    white-space: nowrap;
    overflow: hidden;
}
.orders {
    width: 1159px;
    flex: none;
}
.orders th {
    height: 31px;
    border-right: 1px solid #8ea5c6;
    border-bottom: 1px solid #8ea5c6;
    background: linear-gradient(#f0f6fd, #dde8f5);
    font-family: "Open Sans", "Noto Sans CJK SC", sans-serif;
}
.orders td {
    height: 22px;
    padding-left: 1px;
    background: #b1d4f7;
    border-right: 1px solid #c2defa;
}
.orders .mark {
    padding-left: 3px;
    background: #c3c9d1;
}
.mark i,
.params td i {
    display: block;
    width: 5px;
    height: 8px;
    background: #000;
}
.corner {
    display: block;
    width: 11px;
    height: 11px;
    margin: 16px 2px 0 auto;
    background: #3a78d8;
    clip-path: polygon(100% 0, 100% 100%, 0 100%);
}
.hscroll {
    height: 17px;
    flex: none;
    margin-top: auto;
    display: flex;
    align-items: center;
    justify-content: space-between;
    padding: 0 8px 0 7px;
    background: #f6f6f6;
}
.hscroll i {
    background: #444;
}
.hthumb {
    width: 884px;
    height: 15px;
    margin: 0 auto 0 5px;
    border: 1px solid #8f98a5;
    background: repeating-linear-gradient(90deg, #777 0 1px, transparent 1px 2px) 50% 50% / 7px 9px no-repeat, linear-gradient(#f3f5f8, #e2e6eb);
}
.hsplit {
    height: 6px;
    flex: none;
    display: flex;
    align-items: center;
    justify-content: center;
    gap: 8px;
    padding-left: 184px;
    background: linear-gradient(#c8d2de, #7f92ac);
}
.hsplit i,
.vsplit i {
    width: 6px;
    height: 4px;
    background: #24447c;
    clip-path: polygon(50% 0, 100% 100%, 0 100%);
}
.hsplit span {
    width: 35px;
    border-top: 2px dotted #24447c;
}
.lower {
    flex: 1;
    min-height: 0;
    display: flex;
}
.flow {
    flex: 1;
    min-width: 0;
    display: flex;
    flex-direction: column;
}
.flow-body {
    flex: 1;
    min-height: 0;
    display: flex;
    margin: 0 5px 0 3px;
    border-right: 1px solid #8ea5c6;
}
.vtabs {
    width: 22px;
    flex: none;
    padding-top: 4px;
    background: #e6effb;
    border-right: 1px solid #46679a;
}
.vtab {
    display: grid;
}
.vtab svg,
.vtab span {
    grid-area: 1 / 1;
}
.vtab span {
    padding: 10px 4px;
    writing-mode: vertical-rl;
    text-orientation: sideways;
    text-align: left;
    font-size: 13px;
    font-weight: bold;
    color: #000;
    line-height: 14px;
}
.device {
    width: 195px;
    flex: none;
    display: flex;
    flex-direction: column;
    padding: 7px 1px 28px 6px;
    background: linear-gradient(90deg, #8fb2e8, #dceafb);
    border-top: 1px solid #46679a;
    border-right: 1px solid #46679a;
}
.device-head {
    height: 34px;
    flex: none;
    display: flex;
    align-items: center;
    justify-content: space-between;
    padding: 0 6px 0 15px;
    background: #f3f3f3;
}
.device-body {
    flex: 1;
    background: #c9e9cd;
    border: 1px solid #8ea5c6;
}
.vsplit {
    width: 6px;
    flex: none;
    display: flex;
    flex-direction: column;
    align-items: center;
    justify-content: center;
    gap: 10px;
    padding-bottom: 36px;
    background: linear-gradient(90deg, #dbe6f4, #8396b0);
}
.vsplit i {
    width: 4px;
    height: 8px;
    clip-path: polygon(0 50%, 100% 0, 100% 100%);
}
.vsplit span {
    height: 35px;
    border-left: 2px dotted #24447c;
}
.tree-pane {
    flex: 1;
    min-width: 0;
    display: flex;
    flex-direction: column;
}
.tree-head {
    height: 20px;
    flex: none;
    display: grid;
    grid-template-columns: 155px 54px 75px 75px 1fr;
    background: linear-gradient(#f2f8ff, #dfeaf7);
    border-top: 1px solid #8ea5c6;
    border-bottom: 1px solid #8ea5c6;
    color: #000;
    line-height: 17px;
}
.tree-head span {
    padding-left: 7px;
    border-right: 1px solid #b6c7de;
    white-space: nowrap;
}
.tree-head span:first-child {
    padding-left: 1px;
}
.tree-head span:last-child {
    border: none;
}
.tree-view {
    flex: 1;
    min-height: 0;
    overflow: hidden;
    background: #c9e9cd;
}
.tree {
    width: 100%;
    margin-top: -13px;
}
.c-name {
    width: 155px;
}
.c-bom {
    width: 54px;
}
.c-man {
    width: 75px;
}
.tree td {
    height: 19px;
    padding-left: 6px;
    border-right: 1px solid #d6eedb;
}
.tree td:first-child {
    padding: 0;
    border: none;
}
.tree .sel td {
    border-color: transparent;
    background: linear-gradient(#fff0b8, #ffe48c 40%, #ffd34e 50%, #ffeaa6);
}
.tree .sel td:first-child {
    background: linear-gradient(90deg, #c9e9cd 52px, transparent 52px), linear-gradient(#fff0b8, #ffe48c 40%, #ffd34e 50%, #ffeaa6);
}
.node {
    height: 19px;
    display: flex;
    align-items: center;
    background: repeating-linear-gradient(#555 0 1px, transparent 1px 2px) 25px 0 / 1px 100% no-repeat;
}
.node span {
    padding-left: 5px;
}
.node .branch {
    width: 14px;
    height: 19px;
    margin-left: 41px;
    border-left: 1px dotted #555;
    background: repeating-linear-gradient(90deg, #555 0 1px, transparent 1px 2px) 0 9px / 10px 1px no-repeat;
}
.node .branch.last {
    height: 10px;
    align-self: flex-start;
}
.node .minus {
    width: 9px;
    height: 9px;
    margin-left: 21px;
    border: 1px solid #777;
    background: #fff;
    font: 9px/7px "Liberation Sans", sans-serif;
    text-align: center;
}
.node .stub {
    width: 9px;
    height: 1px;
    border-top: 1px dotted #555;
}
.vscroll {
    width: 17px;
    flex: none;
    display: flex;
    flex-direction: column;
    align-items: center;
    padding: 7px 0 2px;
    background: #f3f5f8;
}
.vthumb {
    width: 15px;
    border: 1px solid #8f98a5;
    background: repeating-linear-gradient(#777 0 1px, transparent 1px 2px) 50% 50% / 9px 7px no-repeat, linear-gradient(90deg, #f8f9fb, #dfe3e9);
}
.vthumb.low {
    height: 48px;
    margin: auto 0 63px;
}
.vthumb.top {
    height: 108px;
    margin: 5px 0 auto;
}
.vscroll i {
    background: #555;
}
.detail {
    width: 464px;
    flex: none;
    display: flex;
    flex-direction: column;
    background: #dce9fb;
}
.detail-tabs {
    height: 26px;
    flex: none;
    display: flex;
    gap: 22px;
    background: linear-gradient(#b5c8e4, #dbe8f8);
    border-bottom: 1px solid #9fb6d4;
    color: #000;
}
.detail-tabs .on {
    width: 68px;
    margin-right: -14px;
    color: #fff;
    font-weight: bold;
    font-size: 13px;
    background: radial-gradient(circle at 50% 100%, #4b8ae8, #1d57b8);
}
.detail-tabs .on::after {
    content: "";
    display: block;
    width: 12px;
    height: 5px;
    margin: 0 auto -6px;
    background: #fff;
    clip-path: polygon(50% 0, 100% 100%, 0 100%);
}
.detail-body {
    flex: 1;
    min-height: 0;
    display: flex;
}
.params-pane {
    width: 378px;
    flex: none;
    display: flex;
    flex-direction: column;
}
.subtabs {
    height: 24px;
    flex: none;
    overflow: hidden;
    background: linear-gradient(#c9dcf8, #f6faff);
    border-bottom: 1px solid #46679a;
}
.subtab {
    display: grid;
    align-items: center;
    padding-left: 5px;
    color: #000;
}
.subtab svg,
.subtab b {
    grid-area: 1 / 1;
}
.subtab b {
    padding-left: 31px;
    text-align: left;
    font-size: 13px;
}
.params-frame {
    flex: 1;
    min-height: 0;
    display: flex;
    padding: 5px 3px 0;
    background: #8fb2e8;
    border-right: 1px solid #46679a;
}
.params-view {
    flex: 1;
    min-width: 0;
    overflow: hidden;
}
.params {
    width: 100%;
}
.p-mark {
    width: 33px;
}
.p-item {
    width: 118px;
}
.p-value {
    width: 120px;
}
.p-unit {
    width: 60px;
}
.params th {
    height: 33px;
    background: linear-gradient(#f2f8ff, #dde8f5);
    border-right: 1px solid #8ea5c6;
    border-bottom: 1px solid #8ea5c6;
}
.params th:last-child {
    padding-left: 18px;
    border-right: none;
}
.params td {
    height: 22px;
    padding-left: 1px;
    background: #f3f3f3;
    border-right: 1px solid #bcd0ea;
    border-bottom: 1px solid #bcd0ea;
}
.params tr:nth-child(odd) td {
    background: #fff;
}
.params tr:nth-child(odd) td:nth-child(2),
.params tr:nth-child(odd) td:nth-child(4) {
    background: #e7f1fc;
}
.params tbody td:first-child,
.params tbody tr:nth-child(odd) td:first-child {
    padding-left: 4px;
    background: linear-gradient(90deg, #dbe7f5, #c3d5ea);
    border-color: #8ea5c6;
}
.params tbody .current td:nth-child(3) {
    position: relative;
    overflow: visible;
    background: #b1d4f7;
}
.params .pink {
    color: #b5228c;
}
.callout {
    position: absolute;
    left: -33px;
    top: -1px;
    width: 130px;
    height: 24px;
    border: 2px solid #cf1717;
    border-radius: 10px;
    box-shadow: 2px 3px 4px #777, inset 2px 3px 4px #8899aa;
}
.notes {
    flex: 1;
    min-width: 0;
    display: flex;
    flex-direction: column;
    overflow: hidden;
}
.notes-frame {
    flex: 1;
    display: flex;
    flex-direction: column;
    padding: 5px 0 0 2px;
    background: #8fb2e8;
    border-left: 1px solid #46679a;
}
.notes-head {
    height: 26px;
    padding-left: 2px;
    line-height: 25px;
    background: linear-gradient(#f2f8ff, #dde8f5);
    border-bottom: 1px solid #8ea5c6;
    color: #24447c;
}
.notes-body {
    flex: 1;
    background: #efefef;
}
.ime {
    position: absolute;
    top: 824px;
    right: 0;
    width: 80px;
    height: 34px;
    display: flex;
    align-items: center;
    gap: 6px;
    overflow: hidden;
    background: linear-gradient(90deg, transparent 16px, #fff 16px) 0 4px / 100% 28px no-repeat;
    color: #1673d0;
    font: bold 15px/28px "Noto Sans CJK SC", sans-serif;
}
```
